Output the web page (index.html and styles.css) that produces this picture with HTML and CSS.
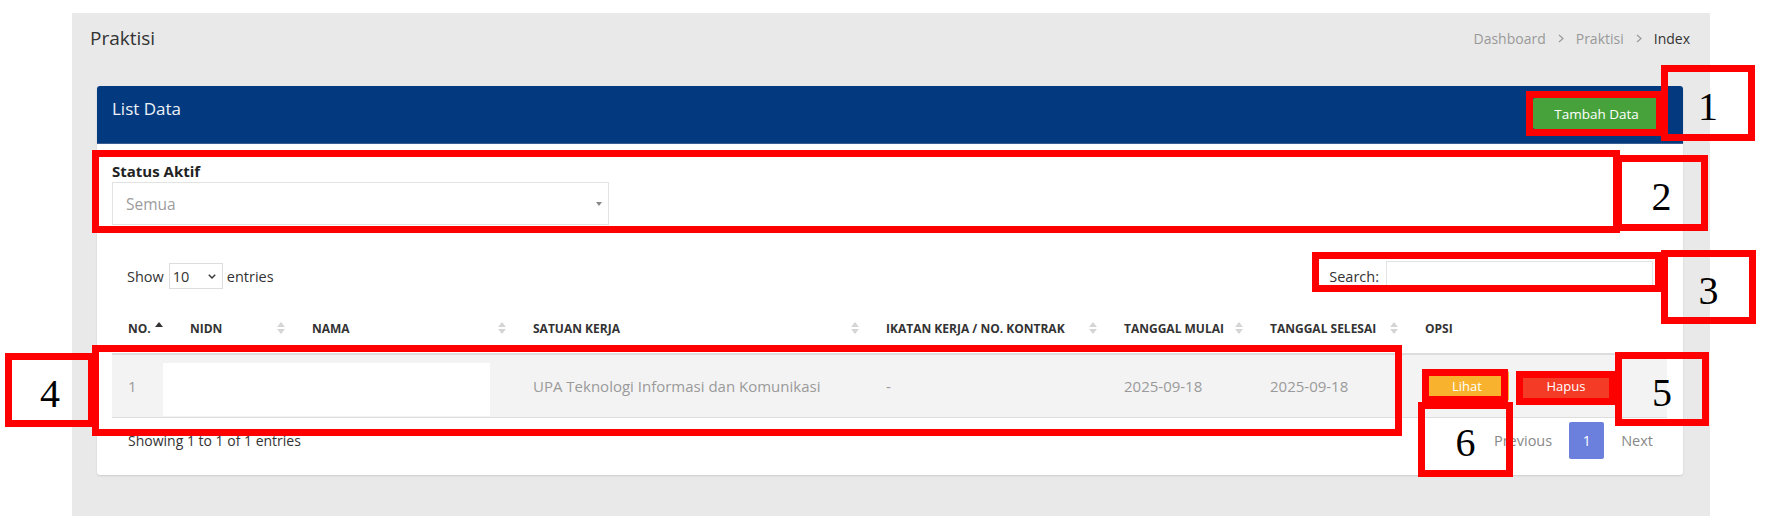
FILE: index.html
```html
<!DOCTYPE html>
<html lang="id">
<head>
<meta charset="utf-8">
<title>Praktisi</title>
<link rel="stylesheet" href="styles.css">
</head>
<body>
<div class="panel">
  <div class="content-header">
    <h1 class="page-title">Praktisi</h1>
    <nav class="crumbs">
      <span>Dashboard</span>
      <svg class="sep" width="6" height="9" viewBox="0 0 6 9"><polyline points="1,1 5,4.5 1,8" fill="none" stroke="#9a9a9a" stroke-width="1.2"/></svg>
      <span>Praktisi</span>
      <svg class="sep" width="6" height="9" viewBox="0 0 6 9"><polyline points="1,1 5,4.5 1,8" fill="none" stroke="#9a9a9a" stroke-width="1.2"/></svg>
      <span class="current">Index</span>
    </nav>
  </div>

  <div class="card">
    <div class="card-head">
      <h2 class="card-title">List Data</h2>
      <button class="btn-add" type="button">Tambah Data</button>
    </div>
    <div class="card-body">
      <div class="field">
        <label class="field-label">Status Aktif</label>
        <div class="select2"><span>Semua</span><span class="caret"></span></div>
      </div>

      <div class="dt-top">
        <div class="len">Show
          <div class="len-sel"><span>10</span>
            <svg width="8" height="5" viewBox="0 0 8 5"><polyline points="0.8,0.8 4,4 7.2,0.8" fill="none" stroke="#333" stroke-width="1.4"/></svg>
          </div>
          entries</div>
        <div class="filter"><span>Search:</span><div class="search"></div></div>
      </div>

      <div class="tbl-wrap">
        <table>
          <colgroup>
            <col class="c1"><col class="c2"><col class="c3"><col class="c4"><col class="c5"><col class="c6"><col class="c7"><col class="c8">
          </colgroup>
          <thead>
            <tr>
              <th><div class="th-in"><span>NO.</span><svg class="sort" width="8" height="12" viewBox="0 0 8 12"><path d="M4 0L8 5H0z" fill="#333"/></svg></div></th>
              <th><div class="th-in"><span>NIDN</span><svg class="sort" width="8" height="12" viewBox="0 0 8 12"><path d="M4 0L8 5H0z" fill="#d5d5d5"/><path d="M0 7H8L4 12z" fill="#d5d5d5"/></svg></div></th>
              <th><div class="th-in"><span>NAMA</span><svg class="sort" width="8" height="12" viewBox="0 0 8 12"><path d="M4 0L8 5H0z" fill="#d5d5d5"/><path d="M0 7H8L4 12z" fill="#d5d5d5"/></svg></div></th>
              <th><div class="th-in"><span>SATUAN KERJA</span><svg class="sort" width="8" height="12" viewBox="0 0 8 12"><path d="M4 0L8 5H0z" fill="#d5d5d5"/><path d="M0 7H8L4 12z" fill="#d5d5d5"/></svg></div></th>
              <th><div class="th-in"><span>IKATAN KERJA / NO. KONTRAK</span><svg class="sort" width="8" height="12" viewBox="0 0 8 12"><path d="M4 0L8 5H0z" fill="#d5d5d5"/><path d="M0 7H8L4 12z" fill="#d5d5d5"/></svg></div></th>
              <th><div class="th-in"><span>TANGGAL MULAI</span><svg class="sort" width="8" height="12" viewBox="0 0 8 12"><path d="M4 0L8 5H0z" fill="#d5d5d5"/><path d="M0 7H8L4 12z" fill="#d5d5d5"/></svg></div></th>
              <th><div class="th-in"><span>TANGGAL SELESAI</span><svg class="sort" width="8" height="12" viewBox="0 0 8 12"><path d="M4 0L8 5H0z" fill="#d5d5d5"/><path d="M0 7H8L4 12z" fill="#d5d5d5"/></svg></div></th>
              <th><div class="th-in"><span>OPSI</span></div></th>
            </tr>
          </thead>
          <tbody>
            <tr>
              <td><div class="cell">1</div></td>
              <td><div class="cell"></div></td>
              <td><div class="cell"></div></td>
              <td><div class="cell">UPA Teknologi Informasi dan Komunikasi</div></td>
              <td><div class="cell">-</div></td>
              <td><div class="cell">2025-09-18</div></td>
              <td><div class="cell">2025-09-18</div></td>
              <td><div class="cell"><button class="btn-act btn-view" type="button">Lihat</button><button class="btn-act btn-del" type="button">Hapus</button></div></td>
            </tr>
          </tbody>
        </table>
        <div class="redact"></div>
      </div>

      <div class="dt-bottom">
        <div class="info">Showing 1 to 1 of 1 entries</div>
        <div class="pager"><span>Previous</span><span class="page-cur">1</span><span>Next</span></div>
      </div>
    </div>
  </div>
</div>

<div class="mark mark-a"></div>
<div class="mark mark-b"></div>
<div class="mark mark-c"></div>
<div class="mark mark-d"></div>
<div class="mark mark-e"></div>
<div class="mark mark-f"></div>
<div class="mark num num-1">1</div>
<div class="mark num num-2">2</div>
<div class="mark num num-3">3</div>
<div class="mark num num-4">4</div>
<div class="mark num num-5">5</div>
<div class="mark num num-6">6</div>
</body>
</html>
```

FILE: styles.css
```css
body {
  margin: 0;
  padding: 13px 0 0 72px;
  background: #ffffff;
  font-family: "Open Sans", "Liberation Sans", sans-serif;
  color: #333333;
}

.panel {
  width: 1638px;
  height: 503px;
  background: #e9e9e9;
}

.content-header {
  height: 50px;
  display: flex;
  align-items: center;
  justify-content: space-between;
  padding: 0 20px 0 18px;
}

.page-title {
  margin: 0;
  font-size: 19px;
  font-weight: 400;
  line-height: 26px;
  color: #333333;
}

.crumbs {
  display: flex;
  align-items: center;
  font-size: 14px;
  color: #999999;
}

.crumbs .sep {
  margin: 0 12px;
}

.crumbs .current {
  color: #333333;
}

.card {
  margin: 23px 27px 0 25px;
  background: #ffffff;
  border-radius: 3px;
  box-shadow: 0 1px 2px rgba(0, 0, 0, 0.12);
}

.card-head {
  height: 58px;
  box-sizing: border-box;
  padding: 12px 23px 0 15px;
  background: #033a7f;
  border-bottom: 1px solid #3b5e91;
  border-radius: 3px 3px 0 0;
  display: flex;
  justify-content: space-between;
  align-items: flex-start;
}

.card-title {
  margin: 0;
  font-size: 17px;
  font-weight: 400;
  line-height: 22px;
  color: #eef2f7;
}

.btn-add {
  width: 127px;
  height: 31px;
  border: 0;
  border-radius: 2px;
  background: #48a23c;
  color: #ffffff;
  font-family: "Open Sans", "Liberation Sans", sans-serif;
  font-size: 13.5px;
  padding: 0;
}

.card-body {
  padding: 17px 16px 16px 15px;
}

.field-label {
  display: block;
  font-size: 15px;
  font-weight: 700;
  line-height: 20px;
  margin-bottom: 1px;
  color: #222222;
}

.select2 {
  width: 497px;
  height: 43px;
  box-sizing: border-box;
  border: 1px solid #e3e3e3;
  display: flex;
  align-items: center;
  justify-content: space-between;
  padding: 0 6px 0 13px;
  color: #9c9c9c;
  font-size: 15.5px;
}

.caret {
  width: 0;
  height: 0;
  border-left: 3.5px solid transparent;
  border-right: 3.5px solid transparent;
  border-top: 4px solid #888888;
}

.dt-top {
  margin-top: 36px;
  height: 30px;
  display: flex;
  justify-content: space-between;
  align-items: center;
  padding: 0 14px 0 15px;
  font-size: 14.5px;
  color: #333333;
}

.len {
  display: flex;
  align-items: center;
}

.len-sel {
  width: 54px;
  height: 26px;
  box-sizing: border-box;
  margin: 0 4px 0 5px;
  border: 1px solid #dddddd;
  display: flex;
  align-items: center;
  justify-content: space-between;
  padding: 0 6px 0 3px;
  font-size: 14.5px;
}

.filter {
  display: flex;
  align-items: center;
  gap: 7px;
  font-size: 14.5px;
}

.search {
  width: 267px;
  height: 30px;
  box-sizing: border-box;
  border: 1px solid #e3e3e3;
  background: #ffffff;
}

.tbl-wrap {
  margin-top: 12px;
  position: relative;
}

table {
  width: 100%;
  table-layout: fixed;
  border-collapse: separate;
  border-spacing: 0;
}

.c1 { width: 62px; }
.c2 { width: 122px; }
.c3 { width: 221px; }
.c4 { width: 353px; }
.c5 { width: 238px; }
.c6 { width: 146px; }
.c7 { width: 155px; }
.c8 { width: 258px; }

th {
  padding: 0 11px 0 16px;
  border-bottom: 2px solid #dddddd;
  font-size: 12px;
  font-weight: 700;
  text-align: left;
  color: #333333;
  white-space: nowrap;
}

.th-in {
  height: 50px;
  display: flex;
  align-items: center;
  justify-content: space-between;
}

.sort {
  flex: none;
}

td {
  padding: 0 16px;
  border-bottom: 1px solid #dddddd;
  background: #f3f3f3;
  font-size: 15px;
  color: #9a9a9a;
  white-space: nowrap;
}

.cell {
  height: 62px;
  display: flex;
  align-items: center;
}

.btn-act {
  height: 30px;
  border: 0;
  border-radius: 2px;
  padding: 0;
  color: #ffffff;
  font-family: "Open Sans", "Liberation Sans", sans-serif;
  font-size: 13px;
}

.btn-view {
  width: 84px;
  margin-right: 10px;
  background: #f8b22d;
}

.btn-del {
  width: 94px;
  background: #f33b25;
}

.redact {
  position: absolute;
  left: 51px;
  top: 60px;
  width: 327px;
  height: 53px;
  background: #ffffff;
}

.dt-bottom {
  margin-top: 4px;
  height: 37px;
  display: flex;
  justify-content: space-between;
  align-items: center;
  padding: 0 14px 0 16px;
  font-size: 14px;
  color: #333333;
}

.pager {
  display: flex;
  align-items: center;
  font-size: 14.5px;
  color: #888888;
}

.page-cur {
  width: 35px;
  height: 37px;
  margin: 0 17px;
  border-radius: 2px;
  background: #6b7fdc;
  color: #ffffff;
  display: flex;
  align-items: center;
  justify-content: center;
  font-size: 14px;
}

/* annotation overlays */
.mark {
  position: absolute;
  box-sizing: border-box;
  border: 7px solid #ff0000;
}

.num {
  display: flex;
  align-items: center;
  justify-content: center;
  padding-top: 6px;
  font-family: "Liberation Serif", serif;
  font-size: 40px;
  color: #000000;
}

.mark-a { left: 1526px; top: 91px; width: 137px; height: 45px; }
.mark-b { left: 92px; top: 150px; width: 1528px; height: 83px; }
.mark-c { left: 1312px; top: 252px; width: 350px; height: 40px; }
.mark-d { left: 92px; top: 345px; width: 1310px; height: 91px; }
.mark-e { left: 1422px; top: 369px; width: 86px; height: 34px; }
.mark-f { left: 1516px; top: 371px; width: 100px; height: 34px; }

.num-1 { left: 1661px; top: 65px; width: 94px; height: 76px; }
.num-2 { left: 1615px; top: 155px; width: 93px; height: 76px; }
.num-3 { left: 1661px; top: 250px; width: 95px; height: 74px; }
.num-4 { left: 5px; top: 353px; width: 90px; height: 74px; }
.num-5 { left: 1615px; top: 352px; width: 94px; height: 74px; }
.num-6 { left: 1418px; top: 402px; width: 95px; height: 75px; }
```
